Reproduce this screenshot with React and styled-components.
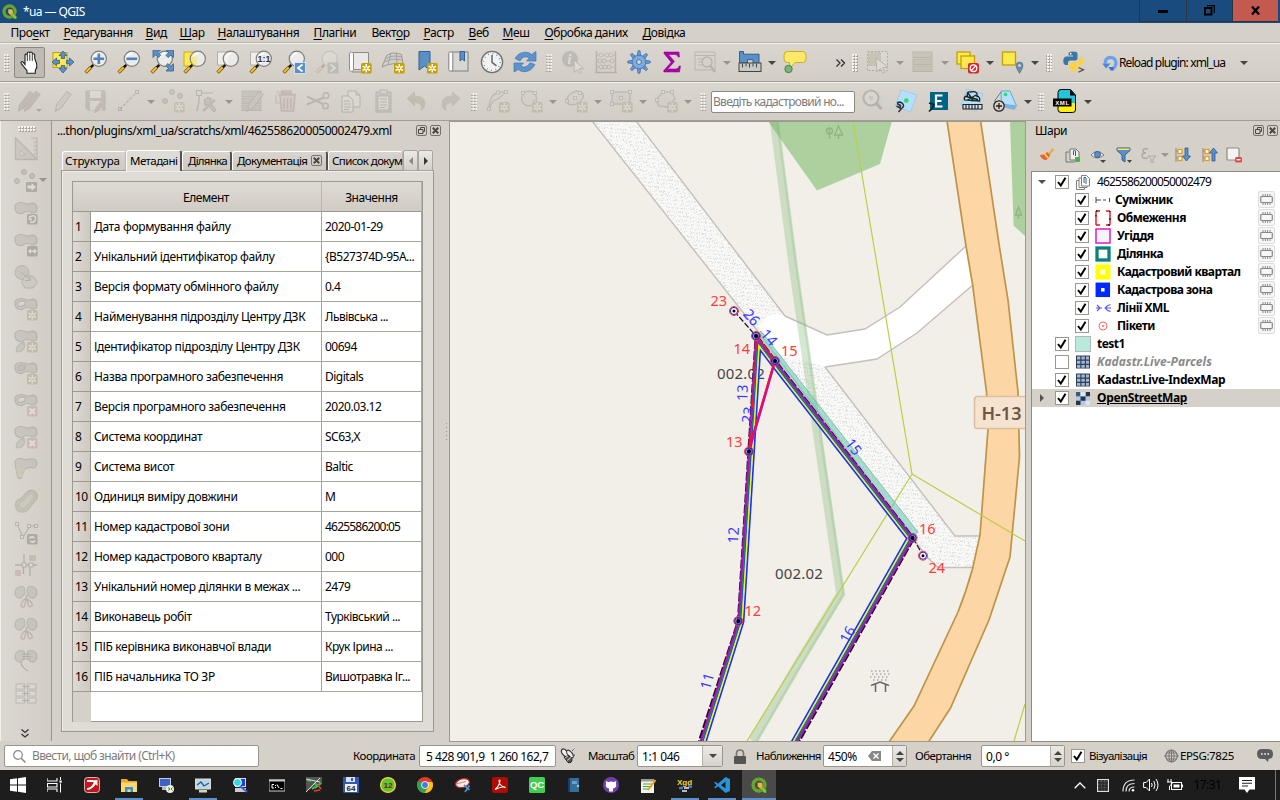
import React from "react";
import styled, { createGlobalStyle, css } from "styled-components";

const Global = createGlobalStyle`
  * { box-sizing: border-box; }
  html, body { margin: 0; padding: 0; }
  body {
    width: 1280px; height: 800px; overflow: hidden;
    font-family: "Noto Sans", "Open Sans", sans-serif;
    font-size: 12px; letter-spacing: -0.45px; color: #000; background: #d5d0c8;
  }
`;

const Window = styled.div`
  width: 1280px; height: 800px; display: flex; flex-direction: column; overflow: hidden; background: #d5d0c8;
`;
const T = styled.span`
  white-space: pre;
  line-height: 16px;
  letter-spacing: ${(p) => (p.$ls !== undefined ? p.$ls + "px" : "inherit")};
  color: ${(p) => p.$color || "inherit"};
`;

/* ---------- title and menu ---------- */
const TitleBar = styled.header`
  height: 23px; flex: none; display: flex; align-items: center; background: #1a4b7e; color: #fff;
  padding-left: 2px; gap: 5px;
`;
const Caption = styled.div`
  display: flex; align-self: flex-start; margin-left: auto; height: 22px; margin-right: 2px;
`;
const CaptionButton = styled.div`
  width: ${(p) => p.$w}px; height: 22px; border: 1px solid #2b3640; border-top: 0; border-right: 0;
  display: flex; align-items: center; justify-content: center;
  background: ${(p) => (p.$close ? "#c4594f" : "#1a4b7e")};
`;
const MenuBar = styled.nav`
  height: 20px; flex: none; display: flex; align-items: center; padding-left: 10.5px; border-bottom: 1px solid #b9b4ac;
`;
const MenuItem = styled.div`
  width: ${(p) => p.$w}px; flex: none; white-space: pre; line-height: 18px; letter-spacing: -0.43px;
  u { text-underline-offset: 2px; }
`;

/* ---------- toolbars ---------- */
const Toolbar = styled.div`
  height: 39px; flex: none; display: flex; align-items: center;
  border-top: 1px solid #f2f0ec; border-bottom: 1px solid #a29d95;
  background: linear-gradient(#dad6cf, #d2cdc5);
`;
const Grip = styled.div`
  width: ${(p) => p.$w || 13}px; height: 18px; flex: none;
  background-image: radial-gradient(circle at 1px 1px, #f6f4f0 0.9px, transparent 1px), radial-gradient(circle at 2px 2px, #aaa59c 0.9px, transparent 1px);
  background-size: 3px 3px; background-clip: content-box;
  padding: 0 ${(p) => ((p.$w || 13) - 6) / 2}px;
`;
const Slot = styled.div`
  width: 33px; height: 33px; flex: none; display: flex; align-items: center; justify-content: center; padding-bottom: 1px;
  ${(p) => p.$off && css`opacity: 0.19; filter: grayscale(0.4);`}
`;
const Pressed = styled.div`
  width: 31px; height: 31px; flex: none; border: 1px solid #8e8a82; border-radius: 2px; background: #bfbbb4;
  display: flex; align-items: center; justify-content: center;
`;
const Arrow = styled.i`
  width: 12px; flex: none; display: flex; justify-content: center;
  &::after { content: ""; border: 4px solid transparent; border-bottom: 0; border-top-color: ${(p) => (p.$off ? "#9a968f" : "#474541")}; border-top-width: 4.5px; }
`;
const Spacer = styled.div`
  width: ${(p) => p.$w}px; flex: none;
`;
const ParcelInput = styled.div`
  width: 144px; height: 22px; margin: 0 1.5px 0 0; flex: none; background: #fff; border: 1px solid #8d8981; border-radius: 2px;
  padding: 0 0 0 1px; display: flex; align-items: center; color: #7d7d7d;
`;

/* ---------- icon primitives on a 24 by 24 grid ---------- */
const Svg = ({ s = 24, children, vb = 24 }) => (
  <svg width={s} height={s} viewBox={`0 0 ${vb} ${vb}`} fill="none">{children}</svg>
);
const Lens = () => (
  <g>
    <path d="M9.3 14.8 6.6 17.6" stroke="#111" strokeWidth="2.4" />
    <path d="M6.8 17.2 1.6 22.6" stroke="#7a5c00" strokeWidth="3.4" />
    <path d="M6.6 17.4 2 22.2" stroke="#fcc52c" strokeWidth="1.8" />
    <circle cx="14.8" cy="8.8" r="7.6" fill="#eef0ee" fillOpacity=".85" stroke="#7e807c" strokeWidth="1.2" />
    <path d="M10 7.5a5.4 5.4 0 0 1 5-4" stroke="#fff" strokeWidth="1.4" />
  </g>
);
const Burst = ({ x = 13, y = 13, c = "#c4a000" }) => (
  <g transform={`translate(${x} ${y})`}>
    <rect width="10.6" height="10.6" rx="1.6" fill={c} />
    <path d="M5.3 1v8.6M1.6 3.1l7.4 4.4M9 3.1 1.6 7.5" stroke="#fff" strokeWidth="1.5" />
    <circle cx="5.3" cy="5.3" r="1" fill={c} />
  </g>
);
const Blue4 = ({ d }) => <path d={d} fill="#5b8fc7" stroke="#34608f" strokeWidth=".8" />;

const Hand = () => (
  <Svg>
    <path d="M7 14.5V5.2c0-1.7 2.3-1.7 2.3 0V3.4c0-1.8 2.5-1.8 2.5 0v-.2c0-1.7 2.5-1.7 2.5.1v1.5c0-1.5 2.3-1.5 2.4.1v3.6l2 5.5c.8 3.5-.8 5.5-1.4 6.3V23.3H9v-2.6L3.3 13.6c-1.1-1.6.6-2.6 1.8-1.5z" fill="#fff" stroke="#222" strokeWidth="1.1" />
    <path d="M9.3 5v6M11.8 4.2v6.5M14.3 5v6" stroke="#222" strokeWidth=".9" />
  </Svg>
);
const PanSel = () => (
  <Svg>
    <rect x="2" y="2.5" width="14" height="15" fill="#fce94f" stroke="#c4a000" />
    <path d="M8.5 8.5h7v7h-7z" fill="#fce94f" />
    <Blue4 d="M12 1l4 4.5h-2.3v3h-3.4v-3H8zM12 23l4-4.5h-2.3v-3h-3.4v3H8zM1 12l4.5-4v2.3h3v3.4h-3V16zM23 12l-4.5-4v2.3h-3v3.4h3V16z" />
  </Svg>
);
const ZoomIn = () => <Svg><Lens /><path d="M14.8 3.5v10.6M9.5 8.8h10.6" stroke="#4f81bd" strokeWidth="2.6" /></Svg>;
const ZoomOut = () => <Svg><Lens /><path d="M9.5 8.8h10.6" stroke="#4f81bd" strokeWidth="2.6" /></Svg>;
const ZoomFull = () => (
  <Svg><Lens /><Blue4 d="M3 0h7.5L8 2.5l2.8 2.8-2.2 2.2-2.8-2.8L3 7.5zM23.5 0v7.5L21 5l-2.8 2.6-2.2-2.2 2.7-2.8L16 0zM23.5 21H16l2.6-2.5-2.8-2.8 2.2-2.2 2.8 2.8 2.7-2.6z" /></Svg>
);
const ZoomSel = () => <Svg><rect x="1" y="2" width="13" height="14" fill="#fce94f" stroke="#d0ae12" /><Lens /><path d="M8.5 6.5h5v9.3q-5-1.500-5-6z" fill="#f7ea86" /></Svg>;
const ZoomLayer = () => <Svg><rect x="1.5" y="2" width="12" height="13" fill="#f0efed" stroke="#b0afab" /><Lens /></Svg>;
const ZoomNative = () => (
  <Svg>
    <rect x="1.5" y="2" width="12" height="13" fill="#f0efed" stroke="#b0afab" /><Lens />
    <text x="8.6" y="12" fontSize="9" fontWeight="700" fontFamily="Liberation Sans, sans-serif" letterSpacing="0" fill="#333">1:1</text>
  </Svg>
);
const ZoomLast = () => <Svg><Lens /><rect x="12.5" y="12.5" width="11" height="11" fill="#5b8fc7" stroke="#fff" strokeWidth=".6" /><path d="M20.5 14.5l-4.5 3.5 4.5 3.5" stroke="#fff" strokeWidth="1.8" /></Svg>;
const ZoomNext = () => <Svg><Lens /><rect x="12.5" y="12.5" width="11" height="11" fill="#606060" /><path d="M15.5 14.5l4.5 3.5-4.5 3.5" stroke="#fff" strokeWidth="1.8" /></Svg>;
const NewMap = () => (
  <Svg>
    <path d="M5 2.5h15.5v17H5z" fill="#e9e8e6" stroke="#8b8b88" />
    <path d="M1.5 4c0-2.5 4-2.5 4 0v15.5c0 2.5-4 2.5-4 0z" fill="#fff" stroke="#8b8b88" />
    <path d="M4 22h9" stroke="#8b8b88" /><Burst />
  </Svg>
);
const New3D = () => (
  <Svg>
    <path d="M1 17 5.5 5.5Q12 1 20.5 4.5L22 15Q12 11.5 1 17z" fill="#cfcecb" stroke="#9a9995" />
    <path d="M3.5 12Q12 7.500 21.5 10M10 3 7 14.5M15.500 3l.5 10.5M5 8.500Q12 4.500 21 7" stroke="#9a9995" strokeWidth=".8" /><Burst />
  </Svg>
);
const Bookmark = () => (
  <Svg><path d="M5 1.500h11V20l-5.500-4L5 20z" fill="#5b8fc7" stroke="#34608f" /><Burst /></Svg>
);
const Bookmarks = () => (
  <Svg>
    <rect x="5" y="2" width="16" height="19" fill="#d6d6d3" stroke="#80807c" /><rect x="1.8" y="2" width="4" height="19" rx="1.5" fill="#fff" stroke="#80807c" />
    <path d="M13 1.500h4.500v9.500l-2.200-2-2.300 2z" fill="#5b8fc7" stroke="#34608f" />
  </Svg>
);
const Clock = () => (
  <Svg>
    <circle cx="12" cy="12" r="10.6" fill="#f2f2f0" stroke="#6f6f6c" strokeWidth="1.3" />
    <circle cx="12" cy="12" r="8.3" stroke="#6d9bd1" strokeWidth="1.5" strokeDasharray="1 3.35" />
    <path d="M12 5v7.3l4.5 3.5" stroke="#666" strokeWidth="1.5" />
  </Svg>
);
const Refresh = () => (
  <Svg>
    <path d="M2 8.500Q6 1.500 13.500 2.200q3.500.4 5 2.300L23 1.500v9.500h-9.500l2.800-3Q10.500 4.500 7 11z" fill="#5d93cd" stroke="#4277b0" strokeWidth=".7" />
    <path d="M22 14.500Q18 22 10.500 21.700q-3.500-.4-5-2.300L1 22v-9h9.500l-2.800 3q5.500 3.300 9.300-3.300z" fill="#5d93cd" stroke="#4277b0" strokeWidth=".7" />
  </Svg>
);
const Info = () => (
  <Svg>
    <circle cx="9" cy="9" r="8" fill="#4d5a62" /><text x="6.5" y="14" fontSize="14" fontWeight="700" fontStyle="italic" fontFamily="Liberation Serif, serif" fill="#fff">i</text>
    <path d="M13 10l9.500 8.500-4.200.3 2 4-2 .9-2-4-3 2.700z" fill="#fff" stroke="#444" />
  </Svg>
);
const Abacus = () => (
  <Svg>
    <path d="M2.500 1v21M21.500 1v21M1 22.500h22" stroke="#333" strokeWidth="1.5" /><path d="M2 5h20M2 11h20M2 17h20" stroke="#444" />
    {[[7, 5, "#a33"], [17, 5, "#a33"], [13, 5, "#a33"], [6, 11], [10, 11], [18, 11], [7, 17], [11, 17], [15, 17]].map(([x, y, c], i) => <circle key={i} cx={x} cy={y} r="2" fill="#ddd" stroke={c || "#333"} />)}
  </Svg>
);
const Gear = () => (
  <Svg>
    <g fill="#6c9bd2" stroke="#3f74b4" strokeWidth=".8">
      {[0, 45, 90, 135, 180, 225, 270, 315].map((a) => <path key={a} d="M10.3 5.5 11 .8h2l.7 4.7z" transform={`rotate(${a} 12 12)`} />)}
      <circle cx="12" cy="12" r="7" />
    </g>
    <circle cx="12" cy="12" r="6" fill="#7fabdd" /><circle cx="12" cy="12" r="2.4" fill="#dedad3" stroke="#3f74b4" />
  </Svg>
);
const Sigma = () => <Svg><path d="M4 2h15l.5 5h-1.300q-.5-2.500-3-2.500H8.500l6 7-6.700 7.500h7.700q3 0 3.700-3h1.300L19.500 22H3.800v-1.500l7.400-8.300L4 3.600z" fill="#b000b0" stroke="#7c007c" strokeWidth=".5" /></Svg>;
const TableLens = () => (
  <Svg>
    <path d="M2 2h20v18H2zM2 5.500h20M5 9h5M5 12h4M5 15h4" stroke="#444" /><circle cx="14" cy="12" r="5" fill="#ccc" stroke="#333" strokeWidth="1.4" /><path d="M17.500 16l4.500 6" stroke="#333" strokeWidth="2.4" />
  </Svg>
);
const Measure = () => (
  <Svg>
    <path d="M1.500 1.500h4v2.700h15.500v9h-6V9.700H9.500V13h-8z" fill="#5b8fc7" stroke="#34608f" />
    <rect x="1" y="13" width="22" height="8.5" fill="#c9c9c6" stroke="#444" /><path d="M4.500 13.500v4M8 13.500v3M11.500 13.500v4M15 13.500v3M18.500 13.500v4" stroke="#444" />
  </Svg>
);
const Tip = () => (
  <Svg>
    <path d="M4.500 1.500h15q3.500 0 3.500 3.500v4q0 3.500-3.500 3.500h-7.500L7 18.500l-.5-6h-2Q1 12.500 1 9V5q0-3.500 3.500-3.500z" fill="#fce96b" stroke="#d0ae12" />
    <circle cx="5.5" cy="19" r="3.7" fill="#74b874" stroke="#5a7a5a" />
  </Svg>
);
const SelectRect = () => (
  <Svg><rect x="1.5" y="1.5" width="20" height="19" stroke="#111" strokeDasharray="2 1.5" fill="#e8e8e8" /><rect x="2" y="2" width="13" height="14" fill="#8a8740" /><path d="M10 8l12 9-5.500.8 2.500 4.400-2 1-2.600-4.500-3.400 3.300z" fill="#fff" stroke="#333" /></Svg>
);
const SelectRows = () => <Svg>{[2, 9, 16].map((y) => <rect key={y} x="2" y={y} width="19" height="5.5" fill="#8a8740" stroke="#45432a" />)}</Svg>;
const Deselect = () => (
  <Svg><rect x="1" y="2" width="13" height="12" fill="#fce94f" stroke="#c4a000" strokeWidth="1.3" /><rect x="5" y="6" width="13.5" height="12.5" fill="#fce94f" stroke="#c4a000" strokeWidth="1.3" />
    <rect x="12" y="13" width="11" height="10.5" rx="2" fill="#d9262c" /><circle cx="17.5" cy="18.2" r="3.3" stroke="#fff" strokeWidth="1.3" /><path d="M15.300 20.500l4.500-4.600" stroke="#fff" strokeWidth="1.3" /></Svg>
);
const SelectPlace = () => (
  <Svg><rect x="1.5" y="2" width="13" height="13" fill="#fce94f" stroke="#c4a000" strokeWidth="1.3" /><path d="M18.500 23.500Q15 18 15 15.500a3.500 3.500 0 0 1 7 0q0 2.500-3.500 8z" fill="#6d8ca6" stroke="#4f7190" strokeWidth=".6" /><circle cx="18.5" cy="15.5" r="1.3" fill="#e8e5de" /></Svg>
);
const Python = () => (
  <Svg>
    <path d="M6.500 5.500V3.500Q6.500 1.500 11 1.500t4.500 2v5q0 2-2.200 2H8.500q-2.500 0-2.500 2.700V15H4q-2.700 0-2.700-4T4 6.500h7V5.500z" fill="#3a76a8" />
    <path d="M17 7h2q2.500 0 2.500 4t-2.500 4.200h-6.500v.8h4v2.500q0 2.500-4.500 2.500t-4.500-2.500v-4q0-2.200 2.300-2.200h5q2.200 0 2.200-2.600z" fill="#ffd245" />
    <circle cx="8.7" cy="3.7" r=".9" fill="#fff" /><path d="M16.500 17.500l5 2.300-5 2.400" stroke="#555" strokeWidth="1.3" />
  </Svg>
);
const Reload = () => (
  <Svg s={16} vb={16}><path d="M3.500 8.500Q2.800 3 8 2.300q5.800 0 6 6 0 3.500-4 6.200" stroke="#6ba2ee" strokeWidth="3.2" /><path d="M.3 8.500h8.200L4 13.500z" fill="#4a86dd" /><path d="M6.500 12h5v3.500h-3z" fill="#3b73c8" /></Svg>
);

/* editing row */
const Pencil = ({ t = "", c = "#d8c79a" }) => (
  <g transform={t}><path d="M3.500 16 14 2.500l4 3L7.500 19 2.500 22z" fill={c} stroke="#4d4a45" strokeWidth="1.2" /><path d="M5.500 17.500 16 4" stroke="#4d4a45" strokeWidth=".8" /></g>
);
const Pencils = () => <Svg><Pencil c="#8a5a50" t="translate(-2 0)" /><Pencil c="#93574d" t="translate(4 0)" /><path d="M18 20h6l-3 3z" fill="#000" /></Svg>;
const EditOne = () => <Svg><Pencil c="#d2cc90" t="translate(2 0)" /></Svg>;
const SaveEdit = () => <Svg><path d="M2 2h19v19H4l-2-2z" fill="#666" stroke="#444" /><rect x="6" y="2" width="11" height="7" fill="#eee" /><rect x="6" y="12" width="12" height="9" fill="#ddd" /><Pencil c="#a3574d" t="translate(9 8) scale(.72)" /></Svg>;
const LineIcon = () => <Svg><path d="M3 20 19 4" stroke="#333" strokeWidth="1.3" strokeDasharray="3 1.5" /><rect x="1.5" y="18.5" width="3" height="3" stroke="#333" /><rect x="18.5" y="1.5" width="3" height="3" stroke="#333" /></Svg>;
const Dots = ({ badge }) => <Svg>
  {[[3, 12], [10, 3], [18, 7]].map(([x, y]) => <circle key={x} cx={x} cy={y} r="2.5" fill="#7a827c" stroke="#333" />)}
  {badge === "arrow" ? <g><rect x="12" y="13" width="11" height="10" rx="1" fill="#222" /><path d="M13.500 16.500h4v-2.500l4.500 4-4.500 4v-2.500h-4z" fill="#fff" /></g> : <Burst c="#857b3a" x={12} />}
</Svg>;
const VertexTool = () => <Svg><path d="M2 22Q5 10 4 4M4 4h14" stroke="#333" strokeWidth="1.2" /><rect x="1.5" y="1.5" width="5" height="5" fill="#ddd" stroke="#333" /><path d="M9 11l4-3 4 2-2 3 6 8-2 2-7-8-2 2z" fill="#777" stroke="#333" /><path d="M20 11 8 22" stroke="#555" strokeWidth="2.5" /></Svg>;
const RowsEdit = () => <Svg>{[2, 9, 16].map((y) => <rect key={y} x="2" y={y} width="19" height="5.5" fill="#898563" stroke="#555" />)}<Pencil c="#c9a58a" t="translate(5 0)" /></Svg>;
const Trash = () => <Svg><path d="M7 6h15l-1.500 16h-12z" fill="#d9a5a0" /><path d="M7 6h15l-1.500 16h-12zM5 5.500h18M9 4h9v-2H9zM11 9v11M14.500 9v11M18 9v11" stroke="#8a3b36" strokeWidth="1.6" /><path d="M3 3h10M3 6v8h4" stroke="#8a3b36" /></Svg>;
const Scissors = () => <Svg><path d="M1 7.500 17 15M1 15.500 18 8.500" stroke="#444" strokeWidth="2" /><circle cx="19.5" cy="17" r="2.8" stroke="#444" strokeWidth="1.5" /><circle cx="20" cy="6.5" r="2.8" stroke="#444" strokeWidth="1.5" /></Svg>;
const Copy = () => <Svg><path d="M9 2h8l4 4v12H9zM17 2v4h4" fill="#eee" stroke="#333" /><path d="M3 7h7l4 4v12H3z" fill="#eee" stroke="#333" /><path d="M5 12h6M5 15h7M5 18h7M5 20.500h5" stroke="#333" /></Svg>;
const Paste = () => <Svg><rect x="4" y="3" width="15" height="20" fill="#999" stroke="#333" /><rect x="6" y="7" width="11" height="14" fill="#eee" stroke="#333" /><rect x="8" y="1" width="7" height="4" fill="#ccc" stroke="#333" /><path d="M8 10h7M8 13h7M8 16h7M8 18.500h5" stroke="#333" /></Svg>;
const Undo = () => <Svg><path d="M2 9.500 9.500 3v4Q20 7 20 14.500 20 19 16 21.500q2.500-8-6.500-8V17z" fill="#806030" stroke="#666" /></Svg>;
const Redo = () => <Svg><path d="M22 9.500 14.500 3v4Q4 7 4 14.500 4 19 8 21.500q-2.500-8 6.500-8V17z" fill="#65755a" stroke="#666" /></Svg>;
const Shape = ({ kind }) => (
  <Svg>
    {kind === "arc" && <path d="M3 20Q3 6 12 3.500L20 3M3 20q4-9 6-9t10-7" stroke="#555" strokeWidth="1.3" />}
    {kind === "circle" && <circle cx="10" cy="9.5" r="7.5" stroke="#555" strokeWidth="1.5" fill="#b7bdb7" fillOpacity=".5" />}
    {kind === "ellipse" && <ellipse cx="11" cy="9" rx="9" ry="6" stroke="#555" strokeWidth="1.5" transform="rotate(-30 11 9)" fill="#b7bdb7" fillOpacity=".5" />}
    {kind === "rect" && <rect x="3" y="3" width="18" height="12" stroke="#555" strokeWidth="1.5" fill="#b7bdb7" />}
    {kind === "poly" && <path d="M9 3h9l3 7-7 8-9-1-3-6z" stroke="#555" strokeWidth="1.5" fill="#b7bdb7" fillOpacity=".5" />}
    {(kind === "rect" ? [[3, 3], [21, 3], [12, 9], [3, 15]] : kind === "arc" ? [[12, 3.5], [20, 3], [3, 20]] : kind === "circle" ? [[4, 4], [16, 4], [16, 13]] : kind === "ellipse" ? [[3, 12], [11, 9], [16, 4]] : [[9, 3], [3, 11], [18, 3]]).map(([x, y], i) => <rect key={i} x={x - 1.5} y={y - 1.5} width="3" height="3" fill="#eee" stroke="#555" />)}
    <Burst c="#756b2a" />
  </Svg>
);
const GrayLens = () => <Svg><path d="M12 6l11 1-3 12-10-2z" fill="#b5c9d0" /><circle cx="10" cy="9" r="7.5" fill="#dfe3e0" stroke="#333" strokeWidth="2.2" /><circle cx="10" cy="9" r="2.4" fill="#6fa88a" /><path d="M15.500 14.500l5 5.500" stroke="#333" strokeWidth="3.2" /></Svg>;
const Parcel = ({ t = "" }) => <g transform={t}><path d="M7 1l16 5-6.500 17L1 17z" fill="#b5dffb" stroke="#8fbfe0" strokeWidth=".6" /><circle cx="12.3" cy="11.5" r="2.3" fill="#1ee06a" /></g>;
const ParcelPick = () => <Svg><Parcel /><path d="M3 14q3-2 5.500.5t-1 5L4.500 23M3 14.500l3.500 2-.5 2.500-3.500-2" stroke="#2a3338" strokeWidth="1.5" /></Svg>;
const ParcelE = () => <Svg><rect x="3" y="3" width="18" height="18" fill="#006487" /><path d="M15.500 6.500H9v11h6.500M9 12h5.500" stroke="#fff" strokeWidth="2.2" /><path d="M2 14l5 1.500-2 4-3 3" stroke="#122" strokeWidth="1.7" /></Svg>;
const ParcelCloud = () => <Svg><Parcel t="translate(0 -1)" /><path d="M4.500 11q-1-4 3-4-1-5 2.500-4 5-1 6 .5 2 1 .5 3.500 4 .5 3 5zM6 7.500l12 3M7.500 11 16 6M8 4l5 7" stroke="#222" strokeWidth="1.3" /><path d="M3 15.500h19v4.500H3zM6 16v4M9 16v4M12 16v4M15 16v4M18 16v4" stroke="#222" strokeWidth="1.1" fill="#c9e3f2" /></Svg>;
const ParcelAdd = () => <Svg><path d="M8 2h9l6.500 15-15-2z" fill="#b5dffb" stroke="#6ba7d0" /><path d="M8 3 1.500 12l7 3.500" stroke="#5d7f99" /><path d="M10 15l13.500 2.500-2 3.500-9-2" fill="#7fb4d8" /><circle cx="12.5" cy="5.5" r="1.8" fill="#1ee06a" /><circle cx="6" cy="17" r="5.2" fill="#d7d3cb" stroke="#222" strokeWidth="1.3" /><path d="M6 14v6M3 17h6" stroke="#222" strokeWidth="1.3" /></Svg>;
const XmlDoc = () => (
  <Svg>
    <path d="M8 .5h9.500L22.500 6v8H5V3.500q0-3 3-3z" fill="#20c7dc" /><path d="M5 14h17.500v6.500q0 3-3 3H8q-3 0-3-3z" fill="#ffef10" />
    <path d="M17.500.5 22.500 6v15q0 2.500-3 2.500H8q-3 0-3-3v-17q0-3 3-3z" stroke="#000" strokeWidth="1" /><path d="M17 .5v6h5.500z" fill="#000" />
    <rect x="0" y="9.5" width="18.5" height="8" fill="#000" /><text x="2.2" y="15.7" fontSize="6" fontWeight="700" fontFamily="Liberation Sans, sans-serif" fill="#fff" textLength="13.5">XML</text>
  </Svg>
);

/* ---------- side toolbar icons ---------- */
const BLOB = "M1 7Q.5 1.500 7 1.500q3 0 6 1.500 2 .5 5-.8 5 .3 5 5.300 0 4.500-5 4.500-2-1.500-5-1.500-2.500 0-5 2Q1.500 13 1 7z";
const BadgeMark = ({ k }) => {
  const fill = k === "x" ? "#b0605a" : "#222";
  if (k === "new") return <Burst c="#756b2a" />;
  return (
    <g><rect x="13" y="13" width="10.6" height="10.6" rx="1.6" fill={fill} />
      {k === "x" && <path d="M15.500 15.500l5.600 5.600M21 15.500l-5.600 5.600" stroke="#fff" strokeWidth="2.4" />}
      {k === "rot" && <path d="M16 21q5 1 5.500-3t-3.500-3-2 3.500h2" stroke="#fff" strokeWidth="1.5" />}
      {k === "lr" && <path d="M14 18.300l3-2.800v2h3v-2l3 2.800-3 2.800v-2h-3v2z" fill="#fff" />}
      {k === "sync" && <path d="M15.500 17.500q2-3 5-.5M21 19.500q-2 3-5 .5" stroke="#fff" strokeWidth="1.6" />}
    </g>
  );
};
const Feature = ({ k, ring, part }) => (
  <Svg>
    <path d={BLOB} fill="#8a9a8a" stroke="#444" strokeWidth="1.2" />
    {ring && <ellipse cx="7.5" cy="6.5" rx="4" ry="2.6" fill={ring === "hole" ? "#e8e4dd" : "#5a8080"} stroke="#444" strokeWidth="1.2" transform="rotate(-15 8 7)" />}
    {part && <path d="M2 21q1-6 8-8 2 9-5 10-3 .3-3-2z" fill="#8a9a8a" stroke="#444" />}
    <BadgeMark k={k} />
  </Svg>
);
const Butterfly = ({ join }) => (
  <Svg>
    <path d="M10 2Q2 0 1 7q0 7 6 6 3-1 4-6zM14 2q8-2 9 5 0 7-6 6-3-1-4-6z" fill="#8a9a8a" stroke="#444" />
    {join ? <path d="M8 5h9M8 7.500h9M8 10h9M7 13q0 5 7 9" stroke="#333" strokeWidth="1.2" /> : <path d="M12 13q-5 4-5 8 3 3 4-2l2-9M13 14q6 3 5 7-3 2-4-2l-2-9" stroke="#7a4a46" strokeWidth="1.5" />}
  </Svg>
);
const SIDE = [
  <Svg key="r"><path d="M1.500 1v21.500h22z" fill="#b49a88" stroke="#555" strokeWidth="1.5" /><path d="M6 13v5h5z" fill="#ece8e2" stroke="#555" /><path d="M17 1h6v21" fill="#cfc6a6" stroke="#555" /><path d="M20 5h3M20 9h3M20 13h3M20 17h3" stroke="#555" /></Svg>,
  <Dots key="d" badge="arrow" />,
  <Feature key="1" k="rot" />, <Feature key="2" k="lr" />,
  <Svg key="3"><circle cx="8" cy="7.5" r="7" fill="#8a9a8a" stroke="#444" /><path d="M11 11h8l4.500 6.500L19 23h-8l-3.500-6z" fill="#a9b5a9" stroke="#444" /><path d="M7 7l9 8M16 11v4.500h-5" stroke="#333" /></Svg>,
  <Feature key="4" k="new" ring="hole" />, <Feature key="5" k="new" part />, <Feature key="6" k="new" ring="fill" />,
  <Feature key="7" k="x" ring="hole" />, <Feature key="8" k="x" part />,
  <Svg key="9"><path d="M1 6q0-5 6-4.500 5 2 9 .5 7-1 7 4.500-1 6-6 4l-6 1-2 5-2 5H4l-2-9z" fill="#8a9a8a" stroke="#444" /><path d="M2 11h9l-3 9H4z" fill="#b09a5c" /></Svg>,
  <Svg key="10"><path d="M12.500 3.500Q17-.5 21.500 3q4 5-1 9.500l-3.500 4q-3 6.500-9 6.500-6-.5-6.500-6.500Q1.500 11 7 9.500z" fill="#7a886a" stroke="#6e6b32" strokeWidth="1.6" /><path d="M14 6q4-3 6 0 1 3-3 5.500l-3 4q-3 5-6.500 4.500-3.500-2-2-5.500 1-1.500 4-3z" fill="#9aaa9a" stroke="#666" /></Svg>,
  <Svg key="11"><path d="M3 3l6 13 7-11h6" stroke="#444" strokeWidth="1.2" />{[[3, 3], [8, 16], [15, 5], [22, 5]].map(([x, y]) => <rect key={x} x={x - 1.5} y={y - 1.5} width="3" height="3" fill="#eee" stroke="#444" />)}<BadgeMark k="sync" /></Svg>,
  <Svg key="12"><path d="M1 12h22M10 1v11M16 12v11M9.500 14v7" stroke="#333" strokeWidth="1.3" /><rect x="8" y="10" width="4" height="4" fill="#eee" stroke="#333" /><rect x="15" y="10" width="4" height="4" fill="#eee" stroke="#333" /><rect x="15" y="2" width="7" height="6" rx="1" fill="#857b3a" /><rect x="1" y="17" width="6" height="6" rx="1" fill="#b0605a" /></Svg>,
  <Butterfly key="13" />, <Butterfly key="14" />, <Butterfly key="15" join />,
  <Svg key="16">{[3, 10, 17].map((y) => <g key={y}><rect x="2" y={y} width="8.5" height="5" fill="#eee" stroke="#555" /><rect x="13.5" y={y} width="8.5" height="5" fill="#eee" stroke="#555" /><path d={`M8 ${y + 2.5}h8`} stroke="#333" strokeWidth="1.2" /></g>)}</Svg>,
];

/* ---------- main area ---------- */
const Main = styled.main`
  height: 621px; flex: none; display: grid; grid-template-columns: 52px 397px 577px 5px 249px;
`;
const SideBar = styled.div`
  border-left: 1px solid #f2f0ec; border-right: 1px solid #9a958c; background: linear-gradient(90deg, #dcd8d1, #d2cdc5);
  display: flex; flex-direction: column; padding-top: 5px; margin-bottom: 1px;
`;
const SideGrip = styled.div`
  width: 18px; height: 6px; margin: 0 0 1px 17px; flex: none;
  background-image: radial-gradient(circle at 1px 1px, #f6f4f0 0.9px, transparent 1px), radial-gradient(circle at 2px 2px, #aaa59c 0.9px, transparent 1px);
  background-size: 3px 3px;
`;
const SideSlot = styled.div`
  height: 32px; flex: none; display: flex; align-items: center; padding-left: 13px;
  & > svg { opacity: 0.22; filter: grayscale(0.3); flex: none; }
  & > i { margin-left: -1px; margin-top: -2px; }
`;
const SideMore = styled.div`
  margin: 20px 0 0 20px; display: flex;
`;
const Dock = styled.section`
  padding: 0 15px 0 9px; display: flex; flex-direction: column; position: relative;
`;
const DockTitle = styled.div`
  height: 19px; margin: 0 -7px 0 -4px; display: flex; align-items: center; flex: none; gap: 3px;
  & > :nth-child(2) { margin-left: auto; }
`;
const MiniButton = styled.div`
  width: 11px; height: 11px; flex: none; border: 1px solid #75726b; border-radius: 2px; display: flex; align-items: center; justify-content: center;
`;
const Tabs = styled.div`
  height: 21px; margin-top: 10px; padding-left: 1px; display: flex; align-items: flex-end; flex: none; overflow: hidden;
  position: relative; z-index: 1; margin-bottom: -1px; font-size: 11.5px;
`;
const Tab = styled.div`
  width: ${(p) => p.$w}px; flex: none; height: ${(p) => (p.$active ? 21 : 19)}px; display: flex; align-items: center; justify-content: flex-start; gap: 4px; white-space: nowrap;
  padding-left: ${(p) => p.$pl || 3}px; padding-bottom: 1px; margin-bottom: ${(p) => (p.$active ? 0 : 1)}px;
  border-top: 1px solid #fff; border-left: 1px solid #fff; border-radius: 3px 3px 0 0;
  border-right: ${(p) => (p.$flat ? "1px solid #b9b5ad" : "2px solid #55524d")};
  background: ${(p) => (p.$active ? "#dfdcd6" : "linear-gradient(#d9d5ce, #cdc8c0)")};
  letter-spacing: ${(p) => p.$ls}px;
`;
const TabScroll = styled.div`
  width: 15px; height: 21px; flex: none; border: 1px solid #aaa69e; border-radius: 2px; background: linear-gradient(#eceae6, #d3cfc8);
  display: flex; align-items: center; justify-content: center;
  &::after { content: ""; border: 4px solid transparent; ${(p) => (p.$left ? "border-left:0;border-right-color:#8d8a84;" : "border-right:0;border-left-color:#3a3835;")} }
`;
const TabPage = styled.div`
  width: 373px; height: 562px; flex: none; border: 1px solid #9d9991; background: #dfdcd6; padding: 10px;
  box-shadow: inset 1px 1px 0 #f0eeea;
`;
const Table = styled.div`
  width: 351px; height: 541px; border: 1px solid #9d9991; background: #fff; display: grid; grid-template-columns: 18px 231px 1fr; grid-template-rows: 30px; grid-auto-rows: 30px;
`;
const HeadCell = styled.div`
  background: linear-gradient(#dedbd5, #d0ccc4); border-bottom: 1px solid #9d9991; border-right: 1px solid #b9b5ad;
  display: flex; align-items: center; justify-content: center; padding-top: 2px;
  ${(p) => p.$span && css`grid-column: span 2; padding-left: 18px;`}
`;
const NumCell = styled.div`
  background: linear-gradient(90deg, #dedbd5, #cec9c1); border-bottom: 1px solid #9d9991; border-right: 1px solid #9d9991;
  padding-left: 2px; line-height: 30px; overflow: hidden; white-space: nowrap; letter-spacing: -0.7px;
`;
const Cell = styled.div`
  border-bottom: 1px solid #a9a59d; border-right: 1px solid #a9a59d; padding-left: 3px; line-height: 30px; white-space: nowrap; overflow: hidden;
  letter-spacing: ${(p) => p.$ls ?? -0.34}px;
`;
const NumFill = styled.div`
  background: #d5d0c8;
`;
const Splitter = styled.div`
  position: absolute; right: 1px; top: 301px; width: 3px; height: 20px;
  background-image: radial-gradient(circle at 1.5px 1.5px, #9d9991 0.9px, transparent 1px); background-size: 3px 4px;
`;
const MapFrame = styled.section`
  border: 1px solid #9d9991; overflow: hidden; display: flex;
`;
const Layers = styled.section`
  display: flex; flex-direction: column;
`;
const LayersTitle = styled.div`
  height: 19px; flex: none; display: flex; align-items: center; gap: 3px; padding: 0 2px 0 4px;
  & > :nth-child(2) { margin-left: auto; }
`;
const LayersTools = styled.div`
  height: 31px; flex: none; display: grid; align-items: center; justify-items: center; padding: 0 0 1px 3px;
  grid-template-columns: 26px 25px 26px 25px 25px 8px 28px 26px 21px;
  & > svg { display: block; }
  & > .off { opacity: 0.35; }
`;
const Tree = styled.div`
  flex: 1; background: #fff; border: 1px solid #8e8a82; border-right: 0; padding-top: 1px; display: flex; flex-direction: column;
`;
const TreeRow = styled.div`
  height: 18px; flex: none; display: flex; align-items: center; padding: 0 5px 1px ${(p) => p.$pad}px;
  background: ${(p) => (p.$sel ? "#d5d0c8" : "transparent")};
  & > svg { flex: none; }
`;
const Expander = styled.i`
  width: 20px; flex: none; padding-left: 3px;
  &::after { content: ""; display: block; width: 0; height: 0; border: 4px solid transparent;
    ${(p) => (p.$open ? "border-bottom:0;border-top-color:#55524d;" : p.$closed ? "border-right:0;margin-left:2px;border-left-color:#55524d;" : "")} }
`;
const Box = styled.i`
  width: 14px; height: 14px; flex: none; background: #fff; border: 1px solid #9a978f; display: flex; align-items: center; justify-content: center;
`;
const Symbol = styled.span`
  width: ${(p) => p.$w || 28}px; flex: none; padding-left: 5.5px; display: flex; align-items: center;
`;
const LayerName = styled.span`
  flex: 1; white-space: nowrap; line-height: 18px; padding-top: 1px; font-weight: ${(p) => (p.$plain ? 400 : 700)};
  font-style: ${(p) => (p.$dim ? "italic" : "normal")}; color: ${(p) => (p.$dim ? "#8a8a8a" : "#000")};
  text-decoration: ${(p) => (p.$under ? "underline" : "none")}; letter-spacing: ${(p) => p.$ls ?? -0.55}px;
`;
const Memory = styled.span`
  width: 17px; height: 17px; flex: none; border: 1px solid #ddd; border-radius: 2px; background: #f6f6f5; display: flex; align-items: center; justify-content: center;
`;

const Check = () => <Box><svg width="10" height="10" viewBox="0 0 10 10" fill="none"><path d="M1 5l2.800 3.500L8.500.8" stroke="#000" strokeWidth="2" /></svg></Box>;
const CloseX = () => <MiniButton><svg width="7" height="7" viewBox="0 0 7 7"><path d="M.8.8l5.400 5.400M6.200.8.8 6.200" stroke="#4a4843" strokeWidth="2" /></svg></MiniButton>;
const Restore = () => <MiniButton><svg width="7" height="7" viewBox="0 0 7 7" fill="none"><path d="M2.500 2V.5h4v4H5M.5 2.500H5v4H.5z" stroke="#4a4843" /></svg></MiniButton>;

/* ---------- map ---------- */
const PARCEL = "M756 336 L775 361 L913 538 L791 753 L697 753 L738.5 621 L749 451 Z";
const GRAIN = Array.from({ length: 620 }, (_, i) => [(i * 37 + ((i * i) % 13)) % 47, (i * 23 + ((i * 7) % 11) + ((i * i) % 5) + Math.floor(i / 47)) % 47]);
const RedLabel = styled.text`
  font: 14.5px "Noto Sans", sans-serif; letter-spacing: 0; fill: #ff3b3b;
`;
const BlueLabel = styled.text`
  font: 14.5px "Noto Sans", sans-serif; letter-spacing: 0; fill: #3a3aff; text-anchor: middle;
`;
const BlockLabel = styled.text`
  font: 15px "Noto Sans", sans-serif; letter-spacing: 0.2px; fill: #454545;
`;
const Node = ({ x, y, open }) => (
  <g fill="none">
    <circle cx={x} cy={y} r="4.5" stroke="#f33" strokeWidth="1" fill={open ? "#fff" : "#6a6ae0"} fillOpacity={open ? 1 : 0.6} />
    <circle cx={x} cy={y} r="3.6" stroke="#22c" strokeWidth="1" /><circle cx={x} cy={y} r={open ? 1.5 : 2} fill="#000" />
  </g>
);
const MapView = () => (
  <svg width="575" height="619" viewBox="450 122 575 619" fill="none">
    <defs>
      <pattern id="grain" width="47" height="47" patternUnits="userSpaceOnUse">
        <rect width="47" height="47" fill="#f8f8f7" />
        {GRAIN.map(([x, y], i) => <rect key={i} x={x} y={y} width="1" height="1" fill={i % 3 ? "#e9e9e9" : "#dedede"} />)}
      </pattern>
      <clipPath id="parcel"><path d={PARCEL} /></clipPath>
    </defs>
    <rect x="450" y="122" width="575" height="619" fill="#f2efe9" />
    <path d="M768 121 L779 137 L817 190.500 L880 164 L892 121z" fill="#add19e" />
    <path d="M1010 121 L1013.600 225.600 L1025 236 V121z" fill="#add19e" />
    <g stroke="#8fb383" strokeWidth="1.3"><circle cx="829.5" cy="131" r="3" /><path d="M829.500 129v10M838.500 126l-4 9h8zM838.500 135v4M1018.500 207l-3 8h6zM1018.500 215v4" /></g>
    <path d="M592 121 L757 330 L927 557 L938 567.500 H976 L982 536 H955 L825 367 L785 316 L636 121z" fill="url(#grain)" stroke="#c3c0bc" strokeWidth="1.4" />
    <path d="M759 326 Q768 310 785 316 L827 335 L865 329 L900 307 L966 246 L974 284 L917 333 L877 359 L825 367 Q800 358 792 360 L776 352z" fill="#fff" />
    <path d="M785 316 L827 335 L865 329 L900 307 L966 246 M974 284 L917 333 L877 359 L825 367" stroke="#c3c0bc" strokeWidth="1.4" />
    <path d="M947 121 L966 246 L972.500 284 L986.500 392 L988 429 L980 535 L972.500 569 Q966 592 958 612 L914 706 L889 742 H928.500 L950.500 708 L989 620 L1010 557 L1019.500 457 L1018 392 L1008 300 L999 244 L980.600 121z" fill="#fcd6a4" stroke="#bf9447" strokeWidth="1.7" />
    <path d="M774 121 L793.500 270 L840.500 594 L797 665 L753 741" stroke="#78b46e" strokeOpacity=".3" strokeWidth="8.5" />
    <path d="M777.500 121 L797 270 L843.500 594 L800 667 L757 741" stroke="#78b46e" strokeOpacity=".22" strokeWidth="3" />
    <g stroke="#b9cf45" strokeWidth="1.2"><path d="M853 121 912 474 747 741M912 474l113 67M1025 704l-11 37" /></g>
    <rect x="974.5" y="396.5" width="60" height="32" rx="3" fill="#f6e3cf" stroke="#d9bfa0" strokeWidth="1.5" />
    <text x="981.5" y="419.500" fontFamily="Noto Sans, sans-serif" fontSize="18" fontWeight="600" letterSpacing="0" fill="#6b5848">H-13</text>
    <g stroke="#666" strokeWidth="1.5"><path d="M871 685.500l9-3.500 9 3.500M875.500 684.500v7.500M885.500 684.500v7.500" /></g>
    <path d="M871 671h20M872 674h18M870 677h18M873 680h16" stroke="#aaa" strokeWidth="1.3" strokeDasharray="1.5 2.5" />

    <path d="M761 331 L918 532 L911 538 L775 361 L756 336z" fill="#75cbb4" fillOpacity=".62" stroke="#5fa893" strokeWidth=".6" />
    <BlockLabel x="717" y="378.5">002.02</BlockLabel>
    <BlockLabel x="775" y="578.5">002.02</BlockLabel>

    <g clipPath="url(#parcel)" strokeMiterlimit="20">
      <path d={PARCEL} stroke="#1533f0" strokeWidth="12" />
      <path d={PARCEL} stroke="#f4f2cf" strokeWidth="8.8" />
      <path d={PARCEL} stroke="#f2ea10" strokeWidth="7.9" />
      <path d={PARCEL} stroke="#1d3ac8" strokeWidth="5.5" />
      <path d={PARCEL} stroke="#0b8a80" strokeWidth="4.5" />
    </g>
    <path d="M755.500 340 L748.500 451 L738 621 L699 741 M913.700 539 L799.500 741 M757 336 l18.500 24.500 L913.700 538" stroke="#1a1028" strokeWidth="2.2" strokeDasharray="9 2" />
    <path d={PARCEL} stroke="#b30fb3" strokeWidth="2" />
    <path d="M756.500 337 L775 361 L749 451" stroke="#b812b8" strokeWidth="2.6" />
    <path d="M757 336.500 L775 360.500 M774.300 361 L748.500 449" stroke="#fb1030" strokeWidth="1.3" />
    <path d="M756.300 340 L750 448" stroke="#fb1030" strokeWidth="1.3" strokeDasharray="12 7" />
    <path d="M734 311 L756 336 M913 538 L923 555.500" stroke="#16163a" strokeWidth="1.2" strokeDasharray="6 2" />
    <Node x={734} y={311} open /><Node x={756} y={336} /><Node x={775} y={361} /><Node x={749} y={451.5} /><Node x={738.3} y={621} /><Node x={912.5} y={538} /><Node x={923} y={555.7} open />

    <RedLabel x="710.5" y="306">23</RedLabel><RedLabel x="733.5" y="353.5">14</RedLabel><RedLabel x="781" y="356">15</RedLabel>
    <RedLabel x="726" y="446.500">13</RedLabel><RedLabel x="919" y="533.5">16</RedLabel><RedLabel x="928.5" y="573">24</RedLabel><RedLabel x="744.5" y="616">12</RedLabel>
    <BlueLabel transform="translate(748.5 320) rotate(49)" y="1">26</BlueLabel>
    <BlueLabel transform="translate(766 340) rotate(49)" y="1">14</BlueLabel>
    <BlueLabel transform="translate(849.5 450) rotate(52)">15</BlueLabel>
    <BlueLabel transform="translate(747.5 393) rotate(-88)">13</BlueLabel>
    <BlueLabel transform="translate(753 416) rotate(-80)">23</BlueLabel>
    <BlueLabel transform="translate(738.5 535.5) rotate(-87)">12</BlueLabel>
    <BlueLabel transform="translate(712 682.5) rotate(-74)">11</BlueLabel>
    <BlueLabel transform="translate(852 637) rotate(-61)">16</BlueLabel>
  </svg>
);

/* ---------- status bar ---------- */
const Status = styled.footer`
  height: 28px; flex: none; display: flex; align-items: center; padding-left: 4px;
`;
const Label = styled.span`
  width: ${(p) => p.$w}px; flex: none; white-space: pre; line-height: 16px; font-size: 11.5px; letter-spacing: ${(p) => p.$ls ?? -0.5}px;
`;
const Field = styled.div`
  width: ${(p) => p.$w}px; height: 22px; flex: none; background: #fff; border: 1px solid #99958d; border-radius: 2px; display: flex; align-items: center;
  padding-left: ${(p) => p.$pl || 5}px; white-space: pre; margin-right: ${(p) => p.$mr || 0}px; color: ${(p) => p.$color || "#000"};
  letter-spacing: ${(p) => p.$ls ?? -0.45}px;
  & > svg { margin-right: ${(p) => p.$gap || 0}px; flex: none; }
`;
const Spin = styled.div`
  width: 14px; height: 20px; margin-left: auto; border-left: 1px solid #b5b1a9; background: linear-gradient(#eceae6, #d6d2cb);
  display: flex; flex-direction: column; align-items: center; justify-content: center; gap: 3px;
  &::before { content: ""; border: 4px solid transparent; border-top: 0; border-bottom-color: #474541; }
  &::after { content: ""; border: 4px solid transparent; border-bottom: 0; border-top-color: #474541; }
`;
const Drop = styled.div`
  width: 20px; height: 20px; margin-left: auto; border-left: 1px solid #b5b1a9; background: linear-gradient(#eceae6, #d6d2cb);
  display: flex; align-items: center; justify-content: center;
`;
const Fixed = styled.div`
  width: ${(p) => p.$w}px; flex: none; display: flex; align-items: center; justify-content: center;
`;

/* ---------- taskbar ---------- */
const TaskBar = styled.div`
  height: 30px; flex: none; background: #1d1d1d; display: flex; align-items: center;
`;
const Task = styled.div`
  width: ${(p) => p.$w || 37.1}px; height: 30px; flex: none; display: flex; align-items: center; justify-content: center;
  background: linear-gradient(${(p) => (p.$run ? "#5c8fc9, #5c8fc9" : "transparent, transparent")}) center bottom / 28px 2px no-repeat;
  ${(p) => p.$active && css`background: linear-gradient(#4a4a4a, #4a4a4a) center top / 34px 28px no-repeat, linear-gradient(#5c8fc9, #5c8fc9) center bottom / 34px 2px no-repeat;`}
`;
const ShowDesktop = styled.div`
  width: 5px; height: 30px; margin-left: auto; border-left: 1px solid #777;
`;
const QLogo = ({ s = 18 }) => (
  <svg width={s} height={s} viewBox="0 0 18 18" fill="none">
    <circle cx="8.5" cy="8.5" r="6.3" stroke="#6aa42c" strokeWidth="3.6" /><path d="M9.500 6.500 16.500 14v3h-2.800L8 11z" fill="#8dbf3a" stroke="#1d5a2a" strokeWidth=".5" /><path d="M7 6h4.500l1 3-2.500 3L7 10z" fill="#f0b24a" />
  </svg>
);
const TxtIcon = ({ bg, fg, children, fs = 9 }) => (
  <svg width="16" height="16" viewBox="0 0 16 16"><rect width="16" height="16" rx="1.5" fill={bg} /><text x="8" y="11.3" textAnchor="middle" fontSize={fs} fontWeight="700" fontFamily="Liberation Sans, sans-serif" letterSpacing="0" fill={fg}>{children}</text></svg>
);
const V = ({ children, s = 16 }) => <svg width={s} height={s} viewBox="0 0 16 16" fill="none">{children}</svg>;
const TASKS = [
  [<V key="a"><path d="M0 2.300 7 1.300v6.200H0zM8 1.200 16 0v7.500H8zM0 8.500h7v6.200l-7-1zM8 8.500h8V16l-8-1.200z" fill="#fff" /></V>],
  [<V key="a"><path d="M0 1v3h10V1M0 15v-3h10v3M.5 6.500h9.500v3.500H.5z" stroke="#fff" strokeWidth="1.1" /><path d="M13.500 0v3M13.500 6.500v9" stroke="#fff" /><rect x="12.5" y="3.5" width="2.2" height="2.2" fill="#fff" /></V>],
  [<V key="a"><rect x=".5" y=".5" width="15" height="15" rx="3" fill="#c3151b" stroke="#f0d8d8" strokeWidth=".8" /><path d="M3 3h6v2H3zM13.500 3v6l-1.800-1.800Q8 12.500 3.500 13q-1.500-1.500 0-2 4-.5 6.200-5.500L8 3.500z" fill="#fff" /></V>],
  [<V key="a"><path d="M0 2h6l1.500 2H16v10H0z" fill="#e8a92c" /><path d="M0 5.500h16V15H0z" fill="#ffd76b" /><path d="M4 15v-5h8v5h-2.500v-2.500h-3V15z" fill="#3b8ed6" /></V>, 1],
  [<V key="a"><rect x="1" y="1" width="12" height="9" fill="#c7ccd8" /><rect x="2" y="2" width="10" height="7" fill="#3b62c4" /><rect x="4" y="10" width="6" height="3" fill="#bbb" /><circle cx="12" cy="12" r="4" fill="#e8f0e0" /><path d="M10 10.500l2 1.500-2 1.500M14.500 10.500l-1.500 1.500 1.500 1.500" stroke="#3c8a2c" /></V>],
  [<V key="a"><rect x="0" y="1.5" width="16" height="11" fill="#d8d8d8" /><rect x="1.5" y="3" width="13" height="8" fill="#b8d8e8" /><path d="M2 8l4-3 3 4 5-3" stroke="#2a5a8a" strokeWidth="1.3" /><rect x="4" y="13" width="8" height="2.5" fill="#d5d5c0" /></V>, 1],
  [<V key="a"><rect x="3" y="1" width="11" height="9" fill="#ddd" /><rect x="4" y="2" width="9" height="7" fill="#1c3fd4" /><circle cx="5.5" cy="5.5" r="4" fill="#35d6e8" stroke="#fff" /><rect x="3" y="11" width="11" height="4" fill="#ccc" /><path d="M8 9l7 6" stroke="#4060e0" strokeWidth="2" /></V>],
  [<V key="a"><rect x="0" y="3" width="16" height="11" fill="#000" stroke="#ccc" /><rect x="0" y="2.5" width="16" height="2" fill="#c8c8c8" /><path d="M5 7.500H3v3.500h2M6.500 8v1M6.500 10v1M8 7.500l2 3.500M11.500 11.500h2" stroke="#fff" /></V>],
  [<V key="a"><rect width="16" height="16" fill="#222" /><path d="M0 0h16v7L0 14z" fill="#555" /><path d="M1 3l4 1M8 6l4 3M6 12l5-3M9 11l6-5" stroke="#2fc34a" strokeWidth="2" /><path d="M0 15 14 1M0 2l14 3" stroke="#ddd" /><path d="M8 14l6-1M12 8l3 4" stroke="#e33" strokeWidth="1.7" /></V>],
  [<V key="a"><path d="M0 0h16v16H1l-1-1z" fill="#3058b8" /><rect x="3" y="0" width="9" height="5" fill="#d8e0f4" /><rect x="8" y="1" width="2" height="3" fill="#3058b8" /><rect x="2" y="7" width="12" height="8" fill="#f3f3ee" /><text x="3.5" y="14" fontSize="8" fontWeight="700" fontFamily="Liberation Sans, sans-serif" letterSpacing="0" fill="#222">64</text></V>],
  [<V key="a"><circle cx="8" cy="8" r="7.3" fill="#55c935" stroke="#f2c53a" strokeWidth="1.5" /><text x="3.8" y="11" fontSize="8" fontWeight="700" fontFamily="Liberation Sans, sans-serif" letterSpacing="0" fill="#8a1410">12</text></V>],
  [<V key="a"><circle cx="8" cy="8" r="8" fill="#e33b2e" /><path d="M8 8 1.200 3.800A8 8 0 0 0 7.500 16L11 10z" fill="#2ea44f" /><path d="M8 5h7.400A8 8 0 0 1 7.500 16L11.200 10z" fill="#fbc116" /><circle cx="8" cy="8" r="3.7" fill="#fff" /><circle cx="8" cy="8" r="2.9" fill="#3b7ded" /></V>],
  [<V key="a"><ellipse cx="7.5" cy="6" rx="7" ry="4.3" fill="#f4efee" stroke="#c22" strokeWidth="1.2" transform="rotate(-15 8 6)" /><path d="M1 7l10-2.500" stroke="#c88" strokeWidth="1.2" /><path d="M9 8l5.500 5M14.500 8.500 10 15" stroke="#4a94c8" strokeWidth="1.7" /></V>],
  [<V key="a"><rect width="16" height="16" rx="2.5" fill="#b30b00" /><path d="M3 12.500Q7.500 9 8 3.500q-1-1-1 1Q8 9 13 10.500q-.5-2-10 2" stroke="#fff" strokeWidth="1.1" /></V>],
  [<TxtIcon key="a" bg="#41cd52" fg="#fff" fs={9.5}>QC</TxtIcon>],
  [<V key="a"><rect x="2" y="1" width="11" height="14" fill="#356d9a" /><path d="M2 1h2v14H2z" fill="#1c3f60" /><rect x="6" y="4" width="5" height="3" fill="#6d9fc6" /><circle cx="12" cy="9" r="1.2" fill="#9cc" /></V>],
  [<V key="a"><circle cx="8" cy="8" r="8" fill="#6e40aa" /><path d="M6 14.500v-3q-4-.5-3-5l-.2-2.500 2.500 1q2.700-.8 5.400 0l2.500-1-.2 2.500q1 4.500-3 5v3z" fill="#fff" /></V>],
  [<V key="a"><rect x="1" y="2" width="13" height="14" fill="#f4f4ee" /><path d="M1 2h13v2.500H1z" fill="#999" /><path d="M3 7h9M3 9.500h9M3 12h6" stroke="#4aa83a" strokeWidth="1.2" /><path d="M15.500 3 8 13" stroke="#f0a020" strokeWidth="2" /></V>],
  [<V key="a"><text x="0" y="7.5" fontSize="8" fontWeight="700" fontFamily="Liberation Sans, sans-serif" letterSpacing="0" fill="#f6d820">Xgd</text><path d="M2 11h4M11 9l4 1" stroke="#4a7ad8" strokeWidth="2.4" /><path d="M7 11h5M5 14h5" stroke="#eee" strokeWidth="1.6" /></V>, 1],
  [<V key="a"><path d="M11.500 0 16 2v12l-4.500 2L4 9.300 1.500 11.300 0 10.500 2.500 8 0 5.500l1.500-.8L4 6.700zM11.500 4.500 7 8l4.500 3.500z" fill="#2a93d8" fillRule="evenodd" /></V>, 1],
  [<QLogo key="a" s={17} />, 1, 1],
];

const MENU = [
  ["Про", "е", "кт", 53], ["", "Р", "едагування", 82], ["", "В", "ид", 34], ["", "Ш", "ар", 38], ["", "Н", "алаштування", 96], ["", "П", "лагіни", 58],
  ["Вект", "о", "р", 52], ["", "Р", "астр", 45], ["", "В", "еб", 34], ["", "М", "еш", 42], ["", "О", "бробка даних", 98], ["", "Д", "овідка", 60],
];
const ROWS = [
  ["Дата формування файлу", "2020-01-29"], ["Унікальний ідентифікатор файлу", "{B527374D-95A..."], ["Версія формату обмінного файлу", "0.4"],
  ["Найменування підрозділу Центру ДЗК", "Львівська ..."], ["Ідентифікатор підрозділу Центру ДЗК", "00694"], ["Назва програмного забезпечення", "Digitals"],
  ["Версія програмного забезпечення", "2020.03.12"], ["Система координат", "SC63,X"], ["Система висот", "Baltic"], ["Одиниця виміру довжини", "М"],
  ["Номер кадастрової зони", "4625586200:05", -0.8], ["Номер кадастрового кварталу", "000"], ["Унікальний номер ділянки в межах ...", "2479"],
  ["Виконавець робіт", "Турківський ..."], ["ПІБ керівника виконавчої влади", "Крук Ірина ..."], ["ПІБ начальника ТО ЗР", "Вишотравка Іг..."],
];
const sym = (c) => <svg width="16" height="16" viewBox="0 0 16 16" fill="none">{c}</svg>;
const CHILDREN = [
  ["Суміжник", sym(<path d="M1 5v6M1 8h5M8 8h3M14.500 6v4" stroke="#444" strokeWidth="1" />), 26],
  ["Обмеження", sym(<g strokeWidth="1.4"><path d="M1 1v14M15 1v14M1 1h4M11 1h4M1 15h4M11 15h4" stroke="#e11" /><path d="M1 5v1.500M15 8v2M1 1h1.500M15 15h-2M15 1v1" stroke="#222" /></g>)],
  ["Угіддя", sym(<rect x="1" y="1" width="14" height="14" stroke="#d41fd4" strokeWidth="1.5" fill="#faf4fa" />)],
  ["Ділянка", sym(<rect x="2" y="2" width="12" height="12" stroke="#0b8277" strokeWidth="3.3" />)],
  ["Кадастровий квартал", sym(<rect x="3" y="3" width="10" height="10" stroke="#ff0" strokeWidth="5" fill="#fff" />)],
  ["Кадастрова зона", sym(<rect x="3.3" y="3.3" width="9" height="9" stroke="#0028ff" strokeWidth="5.5" fill="#fff" />)],
  ["Лінії XML", sym(<path d="M1 8h6M2 5l3 3-3 3M9.500 8H16M15.500 4.500q-4 1-5 3.500 1 2.500 5 3.500" stroke="#5a5af0" strokeWidth="1.2" />)],
  ["Пікети", sym(<g stroke="#f66"><circle cx="8" cy="8" r="4" /><circle cx="8" cy="8" r=".6" fill="#f66" /></g>)],
];
const MemoryIcon = () => (
  <Memory><svg width="13" height="11" viewBox="0 0 13 11" fill="none"><rect x=".7" y="2.5" width="11.6" height="6" rx="1" stroke="#888" strokeWidth="1.2" /><path d="M3 0v2.500M5.300 0v2.500M7.600 0v2.500M10 0v2.500M3 8.500V11M5.300 8.500V11M7.600 8.500V11M10 8.500V11" stroke="#888" /></svg></Memory>
);
const GroupIcon = () => sym(<g stroke="#7d7d7a"><path d="M4 6.500H1.500v9h8V13" /><path d="M6 4H4v9.500h8V12" /><path d="M6.500 1.500h5l3 3v7.500h-8z" fill="#fff" /><path d="M9 9V3.500M9 4q1-2 2 0v6" stroke="#34608f" /></g>);
const GridIcon = () => sym(<g><rect x="1" y="1.5" width="14" height="13" fill="#2d3e58" /><path d="M2 2.500h3.300v3H2zM6.500 2.500h3.300v3H6.500zM11 2.500h3v3h-3zM2 6.700h3.300v3H2zM6.500 6.700h3.300v3H6.500zM11 6.700h3v3h-3zM2 11h3.300v2.700H2zM6.500 11h3.300v2.700H6.500zM11 11h3v2.700h-3z" fill="#a4b8d6" /></g>);
const TileIcon = () => sym(<g><rect x="1" y="2" width="14" height="13" fill="#b7c7dc" /><path d="M10.500 2H15v4.300h-4.500zM5.500 6.300h5v4.400h-5z" fill="#22364f" /><path d="M1 2h4.500v4.300H1z" fill="#3c5a80" /><path d="M1 10.700h4.500V15H1z" fill="#22364f" /><path d="M5.500 2h5v4.300h-5zM10.500 10.700H15V15h-4.500z" fill="#dde6f0" /></g>);

const OrderArrow = ({ up }) => sym(
  <g><path d="M1 1v14M1 4h3M1 11h3" stroke="#888" /><rect x="3" y="2.5" width="4" height="4" fill="#fff" stroke="#e39b22" strokeWidth="1.3" /><rect x="3" y="9.5" width="4" height="4" fill="#fff" stroke="#e39b22" strokeWidth="1.3" />
    <path d={up ? "M11.500 1l4 5H13v8h-3V6H7.500z" : "M11.500 14l4-5H13V1h-3v8H7.500z"} fill="#5b8fc7" stroke="#2d5d92" strokeWidth=".8" /></g>
);

export default function App() {
  return (
    <Window>
      <Global />
      <TitleBar>
        <QLogo s={16} />
        <T $ls={-0.6}>*ua — QGIS</T>
        <Caption>
          <CaptionButton $w={47}><svg width="10" height="4"><rect y="1" width="10" height="3" fill="#000" /></svg></CaptionButton>
          <CaptionButton $w={46}><svg width="11" height="11" viewBox="0 0 11 11" fill="none"><rect x="1" y="3" width="6.5" height="6.5" stroke="#000" strokeWidth="2" /><path d="M3 .7h7.300V8" stroke="#000" strokeWidth="1.2" /></svg></CaptionButton>
          <CaptionButton $w={46} $close><svg width="9" height="9" viewBox="0 0 9 9"><path d="M1 .5l7 8M8 .5l-7 8" stroke="#000" strokeWidth="2.3" /></svg></CaptionButton>
        </Caption>
      </TitleBar>
      <MenuBar>
        {MENU.map(([a, u, b, w], i) => <MenuItem key={i} $w={w}>{a}<u>{u}</u>{b}</MenuItem>)}
      </MenuBar>

      <Toolbar>
        <Grip />
        <Slot><Pressed><Hand /></Pressed></Slot>
        <Slot><PanSel /></Slot><Slot><ZoomIn /></Slot><Slot><ZoomOut /></Slot><Slot><ZoomFull /></Slot><Slot><ZoomSel /></Slot><Slot><ZoomLayer /></Slot>
        <Slot><ZoomNative /></Slot><Slot><ZoomLast /></Slot><Slot $off><ZoomNext /></Slot><Slot><NewMap /></Slot><Slot><New3D /></Slot><Slot><Bookmark /></Slot>
        <Slot><Bookmarks /></Slot><Slot><Clock /></Slot><Slot><Refresh /></Slot>
        <Grip $w={15} />
        <Slot $off><Info /></Slot><Slot $off><Abacus /></Slot><Slot><Gear /></Slot><Slot><Sigma /></Slot><Slot $off><TableLens /></Slot><Arrow $off />
        <Slot><Measure /></Slot><Arrow /><Slot><Tip /></Slot>
        <Spacer $w={25} />
        <svg width="9" height="8" viewBox="0 0 9 8" fill="none"><path d="M.5.5 4 4 .5 7.500M5 .5 8.500 4 5 7.500" stroke="#333" strokeWidth="1.3" /></svg>
        <Spacer $w={4} /><Grip $w={12} />
        <Slot $off><SelectRect /></Slot><Arrow $off /><Slot $off><SelectRows /></Slot><Arrow $off /><Slot><Deselect /></Slot><Arrow /><Slot><SelectPlace /></Slot><Arrow />
        <Grip $w={16} />
        <Slot><Python /></Slot>
        <Spacer $w={12} /><Reload /><Spacer $w={1} /><T $ls={-0.85}>Reload plugin: xml_ua</T><Spacer $w={13} /><Arrow />
      </Toolbar>
      <Toolbar>
        <Grip />
        <Slot $off><Pencils /></Slot><Slot $off><EditOne /></Slot><Slot $off><SaveEdit /></Slot><Slot $off><LineIcon /></Slot><Arrow $off />
        <Slot $off><Dots /></Slot><Slot $off><VertexTool /></Slot><Arrow $off /><Slot $off><RowsEdit /></Slot><Slot $off><Trash /></Slot><Slot $off><Scissors /></Slot>
        <Slot $off><Copy /></Slot><Slot $off><Paste /></Slot><Slot $off><Undo /></Slot><Slot $off><Redo /></Slot>
        <Grip $w={15} />
        <Slot $off><Shape kind="arc" /></Slot><Slot $off><Shape kind="circle" /></Slot><Arrow $off /><Slot $off><Shape kind="ellipse" /></Slot><Arrow $off />
        <Slot $off><Shape kind="rect" /></Slot><Arrow $off /><Slot $off><Shape kind="poly" /></Slot><Arrow $off />
        <Grip $w={17} />
        <ParcelInput><T $ls={-0.7}>Введіть кадастровий но...</T></ParcelInput>
        <Slot $off><GrayLens /></Slot><Slot><ParcelPick /></Slot><Slot><ParcelE /></Slot><Slot><ParcelCloud /></Slot><Slot><ParcelAdd /></Slot><Arrow />
        <Grip $w={15} />
        <Slot><XmlDoc /></Slot><Arrow />
      </Toolbar>

      <Main>
        <SideBar>
          <SideGrip />
          {SIDE.map((icon, i) => <SideSlot key={i}>{icon}{i === 1 && <Arrow $off />}</SideSlot>)}
          <SideMore><svg width="8" height="9" viewBox="0 0 8 9" fill="none"><path d="M.5.5 4 3.500 7.500.5M.5 5 4 8 7.500 5" stroke="#333" strokeWidth="1.3" /></svg></SideMore>
        </SideBar>

        <Dock>
          <DockTitle><T $ls={-0.45}>...thon/plugins/xml_ua/scratchs/xml/4625586200050002479.xml</T><Restore /><CloseX /></DockTitle>
          <Tabs>
            <Tab $w={64} $pl={2} $ls={-0.12} $flat>Структура</Tab><Tab $w={56} $ls={-0.55} $active>Метадані</Tab><Tab $w={50} $pl={5} $ls={-0.75}>Ділянка</Tab>
            <Tab $w={96} $pl={4} $ls={-0.62}>Документація<CloseX /></Tab><Tab $w={75} $pl={3} $ls={-0.6} $flat>Список докум</Tab>
            <TabScroll $left /><TabScroll />
          </Tabs>
          <TabPage>
            <Table>
              <HeadCell $span>Елемент</HeadCell><HeadCell>Значення</HeadCell>
              {ROWS.map(([a, b, ls], i) => <React.Fragment key={i}><NumCell>{i + 1}</NumCell><Cell>{a}</Cell><Cell $ls={ls || -0.5}>{b}</Cell></React.Fragment>)}
              <NumFill />
            </Table>
          </TabPage>
          <Splitter />
        </Dock>

        <MapFrame><MapView /></MapFrame>
        <div />
        <Layers>
          <LayersTitle><T>Шари</T><Restore /><CloseX /></LayersTitle>
          <LayersTools>
            {sym(<g><path d="M14.500 2 9 8" stroke="#e2b04a" strokeWidth="2.5" /><path d="M1 8q5 0 7-3l3 3q-2 5-5 5-4-1-5-5z" fill="#e8622c" /><path d="M5 6l4 5" stroke="#f6cf55" strokeWidth="2" /></g>)}
            {sym(<g stroke="#777"><path d="M4 5H1v10h9" /><path d="M5 2h6l3 3v8H5z" fill="#eee" /><path d="M8.500 8V4q1-2 2 0v5" stroke="#34608f" /><rect x="10" y="10" width="5" height="5" rx="1" fill="#4caf50" stroke="none" /></g>)}
            {sym(<g><path d="M1 8q6-7 13 0-7 6-13 0z" fill="#f4f4f4" stroke="#777" /><circle cx="7.5" cy="7.5" r="3" fill="#5b8fc7" stroke="#34608f" /><path d="M10 13h6l-3 3z" fill="#444" /></g>)}
            {sym(<g><path d="M1 1h13v2.500L9 8v7l-3-2V8L1 3.500z" fill="#5b8fc7" stroke="#34608f" /><path d="M1.500 1.500h12v1.500h-12z" fill="#fce94f" /><path d="M11 13h5l-2.500 3z" fill="#444" /></g>)}
            <svg className="off" width="16" height="16" viewBox="0 0 16 16" fill="none"><path d="M7 2Q2 1 2 4q0 2 3 2-4 0-4 3t6 2" stroke="#666" strokeWidth="1.6" /><path d="M7 9h8l-3 3v4l-2-1v-3z" stroke="#666" /></svg>
            <Arrow $off />
            <OrderArrow /><OrderArrow up />
            {sym(<g><rect x="1" y="1" width="12" height="12" rx="1" fill="#f4f4f2" stroke="#8b8b88" strokeWidth="1.2" /><rect x="9" y="10" width="7" height="5.5" rx="1.5" fill="#e04848" /><path d="M10.500 12.700h4" stroke="#fff" strokeWidth="1.3" /></g>)}
          </LayersTools>
          <Tree>
            <TreeRow $pad={3}><Expander $open /><Check /><Symbol><GroupIcon /></Symbol><LayerName $plain $ls={-0.87}>4625586200050002479</LayerName></TreeRow>
            {CHILDREN.map(([name, s, w]) => (
              <TreeRow key={name} $pad={43}><Check /><Symbol $w={w}>{s}</Symbol><LayerName>{name}</LayerName><MemoryIcon /></TreeRow>
            ))}
            <TreeRow $pad={23}><Check /><Symbol>{sym(<rect x=".5" y=".5" width="15" height="15" fill="#b9e8dd" stroke="#b0b8b4" />)}</Symbol><LayerName>test1</LayerName></TreeRow>
            <TreeRow $pad={23}><Box /><Symbol><GridIcon /></Symbol><LayerName $dim $ls={0.05}>Kadastr.Live-Parcels</LayerName></TreeRow>
            <TreeRow $pad={23}><Check /><Symbol><GridIcon /></Symbol><LayerName $ls={-0.38}>Kadastr.Live-IndexMap</LayerName></TreeRow>
            <TreeRow $pad={3} $sel><Expander $closed /><Check /><Symbol><TileIcon /></Symbol><LayerName $under $ls={-0.35}>OpenStreetMap</LayerName></TreeRow>
          </Tree>
        </Layers>
      </Main>

      <Status>
        <Field $w={255} $pl={8} $mr={94} $color="#7d7d7d" $gap={6}>
          <svg width="13" height="13" viewBox="0 0 13 13" fill="none"><circle cx="5" cy="5" r="4.3" stroke="#888" strokeWidth="1.2" /><path d="M8.200 8.200l4.300 4.300" stroke="#888" strokeWidth="1.5" /></svg>
          <T $ls={-0.63}>Ввести, щоб знайти (Ctrl+K)</T>
        </Field>
        <Label $w={66} $ls={-0.45}>Координата</Label>
        <Field $w={137} $pl={6} $ls={-0.53}>5 428 901,9  1 260 162,7</Field>
        <Fixed $w={24}><svg width="16" height="16" viewBox="0 0 16 16" fill="none"><ellipse cx="5" cy="5" rx="2.6" ry="4.6" transform="rotate(-40 5 5)" fill="#eee" stroke="#333" strokeWidth="1.3" /><ellipse cx="10" cy="6" rx="2.2" ry="4.6" transform="rotate(-40 10 6)" fill="#eee" stroke="#333" strokeWidth="1.1" /><path d="M4 9l4 5.500q4 1 4-3l-3-4z" fill="#555" stroke="#222" /><path d="M5 10l3-2M7 12.500l4-3" stroke="#ddd" /><path d="M12 3l3-3M12 7h3" stroke="#444" strokeDasharray="1 1" /></svg></Fixed>
        <Spacer $w={8} />
        <Label $w={49} $ls={-0.75}>Масштаб</Label>
        <Field $w={86} $pl={4}>1:1 046<Drop><Arrow /></Drop></Field>
        <Fixed $w={33}><svg width="12" height="15" viewBox="0 0 12 15" fill="none"><path d="M2.500 7V4.500q0-3.500 3.500-3.500t3.500 3.500V7" stroke="#777" strokeWidth="1.7" /><rect x="0" y="7" width="12" height="8" rx="1" fill="#555" /></svg></Fixed>
        <Label $w={67} $ls={-0.65}>Наближення</Label>
        <Field $w={84} $pl={4}>450%<Spacer $w={11} /><svg width="13" height="10" viewBox="0 0 13 10"><path d="M4 0h9v10H4L0 5z" fill="#888" /><path d="M5.500 2.500l5 5M10.500 2.500l-5 5" stroke="#fff" strokeWidth="1.4" /></svg><Spin /></Field>
        <Spacer $w={8} />
        <Label $w={66} $ls={-0.6}>Обертання</Label>
        <Field $w={84} $pl={4}>0,0 °<Spin /></Field>
        <Spacer $w={6} /><Check /><Spacer $w={4} />
        <Label $w={74} $ls={-0.7}>Візуалізація</Label>
        <Fixed $w={17}><svg width="15" height="14" viewBox="0 0 15 14" fill="none"><circle cx="7.5" cy="7" r="5.8" stroke="#777" strokeWidth="1.2" /><ellipse cx="7.5" cy="7" rx="2.6" ry="5.8" stroke="#777" /><path d="M0 7h15M2.500 4h10M2.500 10h10M7.500 1v12" stroke="#777" /></svg></Fixed>
        <Label $w={77} $ls={-0.4}>EPSG:7825</Label>
        <svg width="16" height="14" viewBox="0 0 16 14"><path d="M5 0h6q5 0 5 5t-4.500 5l-.5 3-3-3H5Q0 10 0 5t5-5z" fill="#5c5c5c" /><path d="M4 5h1.500M7.300 5h1.500M10.500 5H12" stroke="#fff" strokeWidth="1.6" /></svg>
      </Status>

      <TaskBar>
        {TASKS.map(([icon, run, active], i) => <Task key={i} $run={run} $active={active} $w={i === 0 ? 36 : undefined}>{icon}</Task>)}
        <Spacer $w={291} />
        <Fixed $w={22}><svg width="12" height="7" viewBox="0 0 12 7" fill="none"><path d="M.7 6.300 6 1l5.300 5.300" stroke="#fff" strokeWidth="1.3" /></svg></Fixed>
        <Fixed $w={25}><svg width="12" height="13" viewBox="0 0 12 13"><rect x=".5" y=".5" width="11" height="12" fill="#555" stroke="#ddd" /><path d="M3 1v11M6 1v11M9 1v11M1 4h10M1 7h10M1 10h10" stroke="#222" /></svg></Fixed>
        <Fixed $w={25}><svg width="13" height="13" viewBox="0 0 13 13" fill="none"><path d="M1 12.500Q1 1 12.500 1M4 12.500Q4 4.500 12.500 4.500M7 12.500q0-4.500 5.500-4.500" stroke="#ddd" strokeWidth="1.2" /><circle cx="11" cy="11.3" r="1.3" fill="#fff" /></svg></Fixed>
        <Fixed $w={21}><svg width="16" height="14" viewBox="0 0 16 14" fill="none"><path d="M.6 4.500h2.500L6.500 1v12L3.100 9.500H.6z" stroke="#fff" /><path d="M8.500 5q1.300 2 0 4M10.800 3q2.400 4 0 8M13 1q4 6 0 12" stroke="#fff" /></svg></Fixed>
        <Fixed $w={27}><svg width="16" height="12" viewBox="0 0 16 12" fill="none"><rect x="4.5" y="3.5" width="10" height="7" stroke="#fff" /><rect x="6.5" y="5.5" width="6" height="3" fill="#fff" /><path d="M15.500 5.500v3" stroke="#fff" /><path d="M1 0v3M4 0v3M0 3h5v2L2.500 7v4" stroke="#fff" /></svg></Fixed>
        <Fixed $w={37}><T $color="#000" $ls={-0.6}>17:31</T></Fixed>
        <Fixed $w={43}><svg width="16" height="16" viewBox="0 0 16 16"><path d="M0 0h16v12.500h-5.500L8 16l-2.500-3.500H0z" fill="#fff" /><path d="M3 3.500h10M3 6.200h10M3 9h6" stroke="#222" strokeWidth="1.1" /></svg></Fixed>
        <ShowDesktop />
      </TaskBar>
    </Window>
  );
}
